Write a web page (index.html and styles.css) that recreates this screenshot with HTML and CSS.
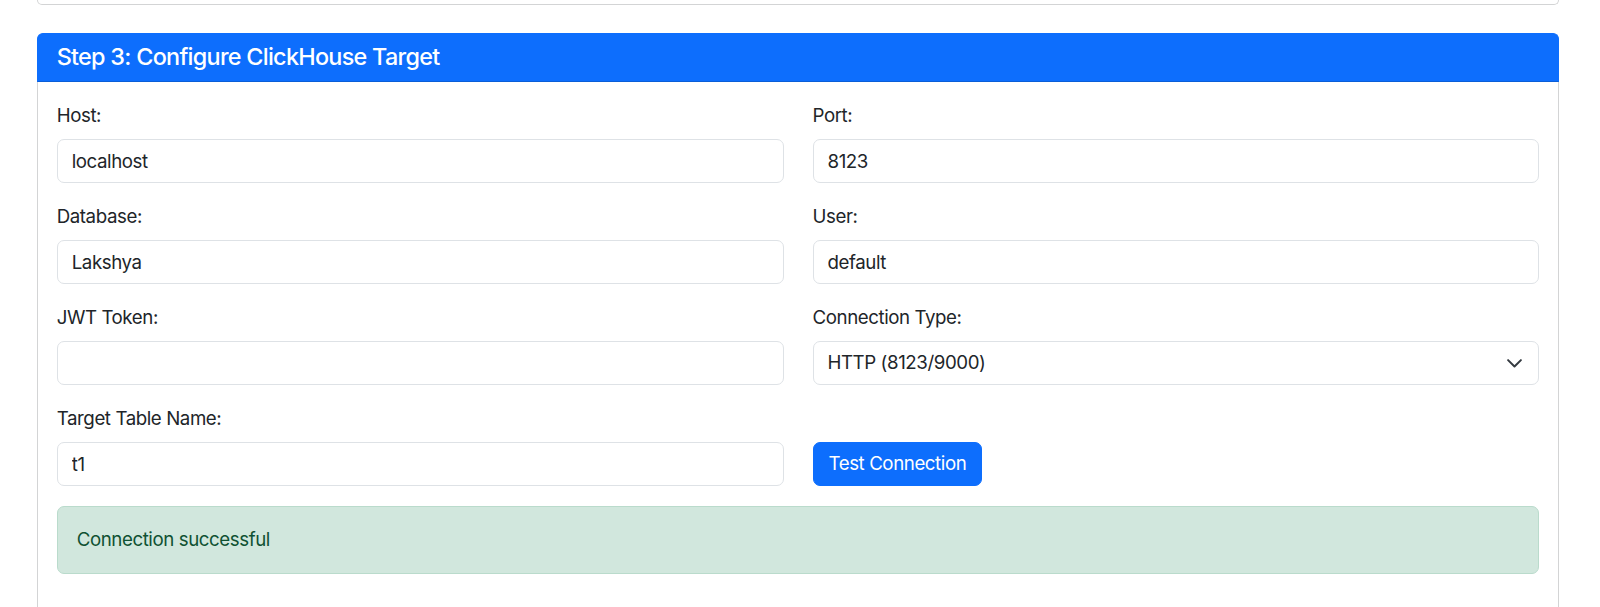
FILE: index.html
```html
<!DOCTYPE html>
<html lang="en">
<head>
<meta charset="utf-8">
<title>Step 3: Configure ClickHouse Target</title>
<link rel="stylesheet" href="styles.css">
</head>
<body>
<div class="page">
  <div class="card card-prev"></div>
  <div class="card">
    <div class="card-header"><h5 class="card-title">Step 3: Configure ClickHouse Target</h5></div>
    <div class="card-body">
      <div class="form-grid">
        <div class="field">
          <label class="form-label" for="host">Host:</label>
          <input class="form-control" id="host" type="text" value="localhost">
        </div>
        <div class="field">
          <label class="form-label" for="port">Port:</label>
          <input class="form-control" id="port" type="text" value="8123">
        </div>
        <div class="field">
          <label class="form-label" for="db">Database:</label>
          <input class="form-control" id="db" type="text" value="Lakshya">
        </div>
        <div class="field">
          <label class="form-label" for="user">User:</label>
          <input class="form-control" id="user" type="text" value="default">
        </div>
        <div class="field">
          <label class="form-label" for="jwt">JWT Token:</label>
          <input class="form-control" id="jwt" type="text" value="">
        </div>
        <div class="field">
          <label class="form-label" for="ctype">Connection Type:</label>
          <div class="select-wrap">
            <select class="form-select" id="ctype">
              <option>HTTP (8123/9000)</option>
            </select>
            <svg class="select-chevron" width="19" height="14" viewBox="0 0 16 12" aria-hidden="true"><path d="m2.5 3.5 5.5 5.5 5.5-5.5" fill="none" stroke="#343a40" stroke-width="1.7" stroke-linecap="round" stroke-linejoin="round"/></svg>
          </div>
        </div>
        <div class="field">
          <label class="form-label" for="table">Target Table Name:</label>
          <input class="form-control" id="table" type="text" value="t1">
        </div>
        <div class="field field-action">
          <button class="btn-primary" type="button">Test Connection</button>
        </div>
      </div>
      <div class="alert-success">Connection successful</div>
    </div>
  </div>
</div>
</body>
</html>
```
FILE: styles.css
```css
* { box-sizing: border-box; }
html, body { margin: 0; padding: 0; background: #fff; }
body {
  font-family: Inter, "Helvetica Neue", "Liberation Sans", Arial, sans-serif;
  font-size: 18.7px;
  line-height: 1.5;
  letter-spacing: -0.42px;
  color: #212529;
}
.page {
  padding-left: 37px;
  width: 1559px;
}
.card {
  border: 1px solid #d3d4d5;
  border-radius: 7px;
  background: #fff;
}
.card-prev {
  height: 5px;
  border-top: none;
  border-radius: 0 0 7px 7px;
  margin-bottom: 28px;
}
.card-header {
  background: #0d6efd;
  color: #fff;
  padding: 9.4px 18.7px;
  border: 1px solid #0d6efd;
  border-bottom-color: #0b5ed7;
  border-radius: 6px 6px 0 0;
  margin: -1px -1px 0 -1px;
}
.card-title {
  margin: 0;
  font-size: 23.4px;
  font-weight: 500;
  line-height: 1.2;
  letter-spacing: -0.72px;
}
.card-body {
  padding: 20px 18.7px 60px;
}
.form-grid {
  display: grid;
  grid-template-columns: 1fr 1fr;
  column-gap: 29px;
}
.field {
  margin-bottom: 19.7px;
  display: flex;
  flex-direction: column;
}
.field-action {
  justify-content: flex-end;
  align-items: flex-start;
}
.form-label {
  display: block;
  margin-bottom: 9.4px;
  line-height: 28px;
}
.form-control, .form-select {
  display: block;
  width: 100%;
  height: 44px;
  padding: 7px 14px;
  font: inherit;
  letter-spacing: inherit;
  line-height: 28px;
  color: #212529;
  background: #fff;
  border: 1px solid #dee2e6;
  border-radius: 7px;
  outline: none;
}
.select-wrap { position: relative; }
.form-select {
  -webkit-appearance: none;
  appearance: none;
  padding-right: 50px;
}
.select-chevron {
  position: absolute;
  right: 15px;
  top: 15px;
  pointer-events: none;
}
.btn-primary {
  font: inherit;
  letter-spacing: inherit;
  line-height: 28px;
  height: 44px;
  padding: 7px 15px;
  color: #fff;
  background: #0d6efd;
  border: 1px solid #0d6efd;
  border-radius: 7px;
}
.alert-success {
  padding: 18.7px 19px;
  line-height: 28px;
  color: #0f5132;
  background: #d1e7dd;
  border: 1px solid #badbcc;
  border-radius: 7px;
}
```
